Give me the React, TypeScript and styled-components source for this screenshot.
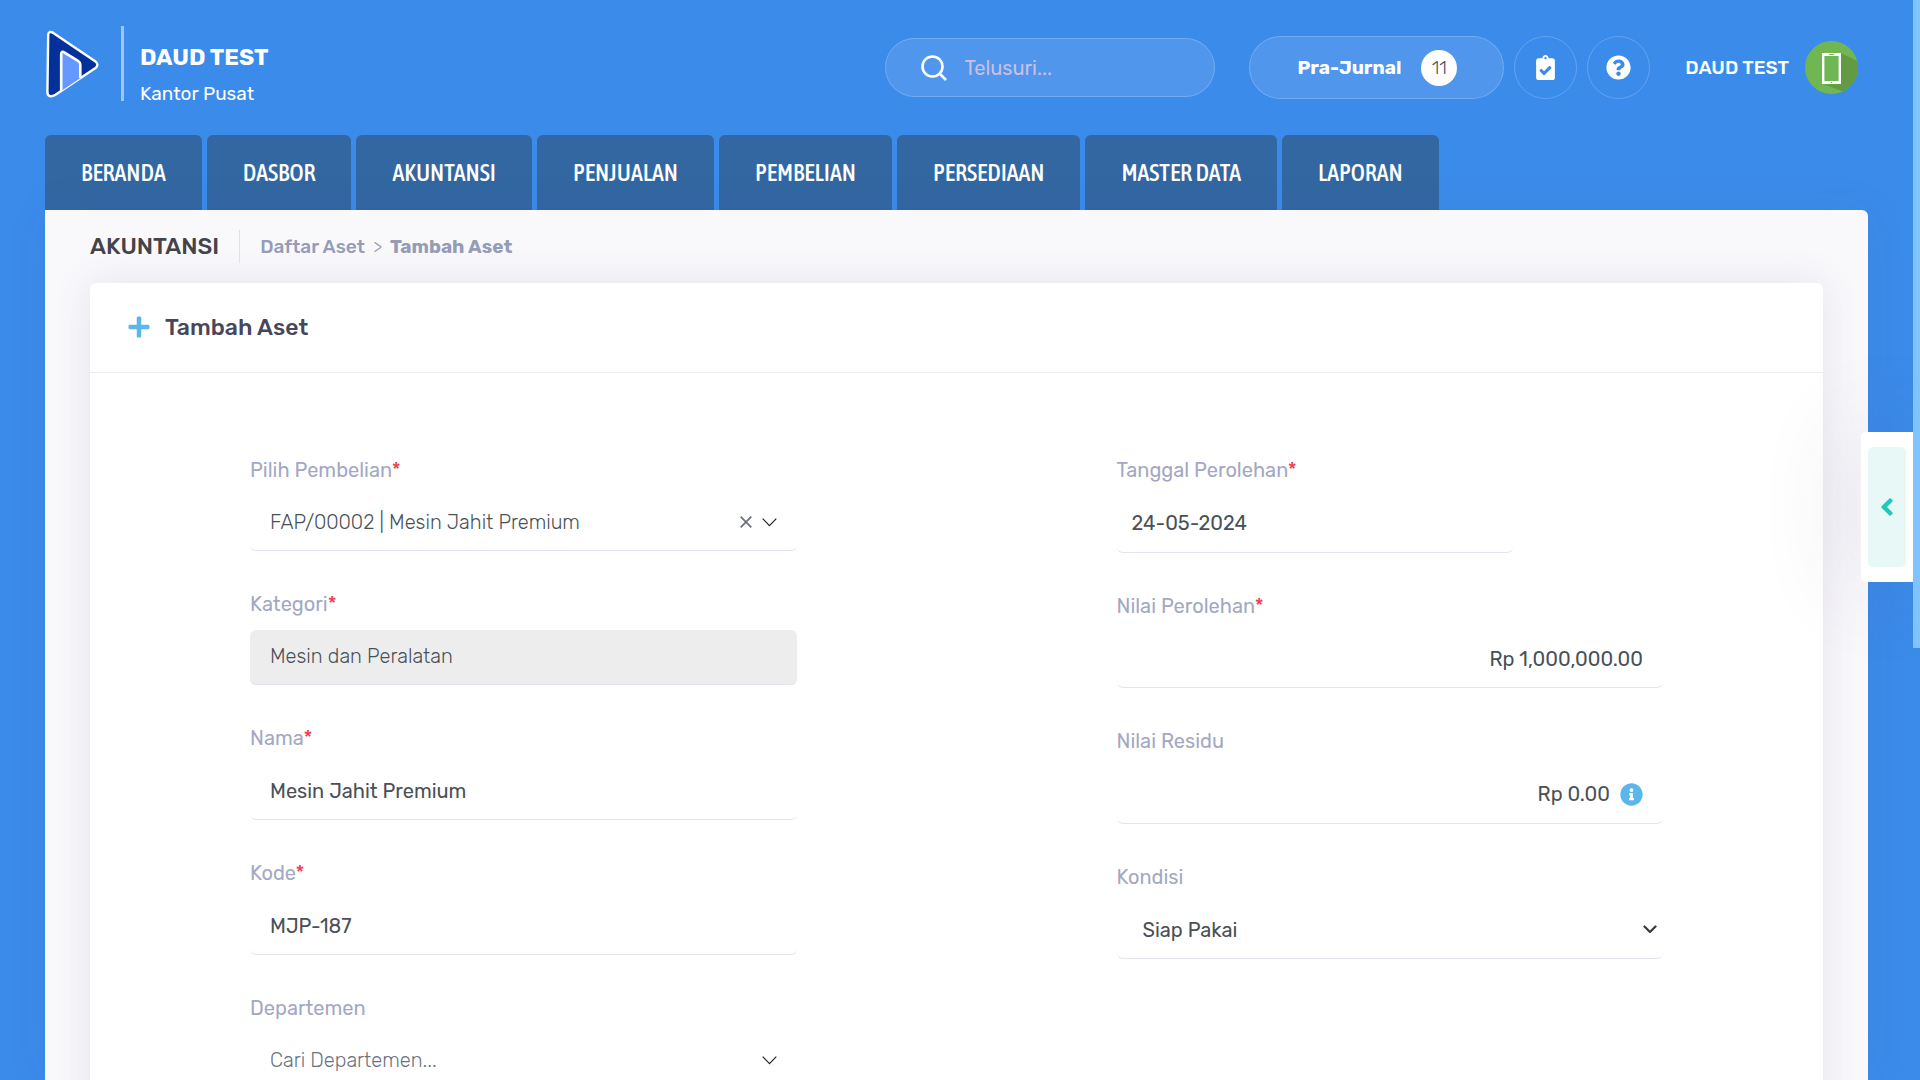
import React from "react";
import styled, { createGlobalStyle } from "styled-components";
import {
  FaPlus,
  FaClipboardCheck,
  FaQuestionCircle,
  FaInfoCircle,
  FaAngleLeft,
} from "react-icons/fa";

const GlobalStyle = createGlobalStyle`
  *, *::before, *::after { box-sizing: border-box; }
  body {
    margin: 0;
    background: #3b8bea;
    font-family: Rubik, Roboto, "Liberation Sans", sans-serif;
    font-size: 20px;
    color: #495057;
  }
  button, input, select { font: inherit; color: inherit; }
  a { color: inherit; text-decoration: none; }
  h1, h2, p { margin: 0; }
`;

const Page = styled.div`
  height: 100vh;
  overflow: hidden;
  display: flex;
  flex-direction: column;
  padding: 0 52px 0 45px;
`;

const Header = styled.header`
  display: flex;
  align-items: center;
  height: 135px;
  flex: none;
  color: #fff;
  font-size: 19px;
`;

const Brand = styled.a`
  display: flex;
  align-items: center;
  margin-right: auto;
  padding-bottom: 8px;
`;

const BrandText = styled.span`
  display: flex;
  flex-direction: column;
  gap: 10px;
  height: 75px;
  margin-left: 22px;
  padding: 16px 0 0 16px;
  border-left: 3px solid rgba(255, 255, 255, 0.5);
`;

const CompanyName = styled.strong`
  font-size: 23px;
  line-height: 30px;
  font-weight: 700;
`;

const BranchName = styled.span`
  line-height: 24px;
`;

const SearchBox = styled.label`
  display: flex;
  align-items: center;
  gap: 18px;
  width: 330px;
  height: 59px;
  padding: 0 35px;
  margin-right: 34px;
  border: 1px solid rgba(255, 255, 255, 0.2);
  border-radius: 30px;
  background: rgba(255, 255, 255, 0.1);
`;

const SearchInput = styled.input`
  flex: 1;
  min-width: 0;
  padding: 0;
  border: 0;
  outline: 0;
  background: transparent;
  font-size: 20px;
  &::placeholder { color: #cbbfe2; opacity: 1; }
`;

const JournalButton = styled.button`
  display: flex;
  align-items: center;
  gap: 20px;
  height: 63px;
  padding: 0 46px 0 48px;
  border: 1px solid rgba(255, 255, 255, 0.2);
  border-radius: 32px;
  background: rgba(255, 255, 255, 0.1);
  font-weight: 700;
`;

const Count = styled.span`
  display: grid;
  place-items: center;
  width: 36px;
  height: 36px;
  border-radius: 50%;
  background: #fff;
  color: #495057;
  font-weight: 300;
`;

const RoundButton = styled.button`
  display: grid;
  place-items: center;
  width: 63px;
  height: 63px;
  margin-left: 10px;
  padding: 0;
  border: 1px solid rgba(255, 255, 255, 0.2);
  border-radius: 50%;
  background: transparent;
  font-size: 25px;
`;

const Account = styled.button`
  display: flex;
  align-items: center;
  gap: 16px;
  margin: 0 10px 0 35px;
  padding: 0;
  border: 0;
  background: transparent;
  font-weight: 500;
`;

const Nav = styled.nav`
  display: flex;
  gap: 5px;
  flex: none;
  height: 75px;
`;

const NavTab = styled.a`
  display: flex;
  align-items: center;
  padding: 0 36px;
  border-radius: 6px 6px 0 0;
  background: #3367a2;
  color: #fff;
  font-family: "Asap Condensed", "Roboto Condensed", "Liberation Sans Narrow", Roboto, sans-serif;
  font-size: 24px;
  font-weight: 500;
`;

const Panel = styled.main`
  flex: 1;
  min-height: 0;
  overflow: hidden;
  padding: 0 45px;
  border-radius: 0 6px 0 0;
  background: #f9f9fc;
  box-shadow: 0 0 50px rgba(82, 63, 105, 0.05);
`;

const SubHeader = styled.div`
  display: flex;
  align-items: center;
  height: 73px;
`;

const Section = styled.h1`
  padding-right: 20px;
  border-right: 1px solid #dfe1e8;
  font-size: 23px;
  line-height: 33px;
  font-weight: 500;
  color: #434349;
`;

const Crumbs = styled.nav`
  display: flex;
  gap: 8px;
  padding-left: 20px;
  color: #959cb6;
  font-size: 19px;
  font-weight: 500;
`;

const Separator = styled.span`
  font-weight: 300;
`;

const CurrentCrumb = styled.span`
  font-weight: 700;
`;

const Card = styled.section`
  min-height: 1200px;
  border-radius: 6px;
  background: #fff;
  box-shadow: 0 0 38px rgba(82, 63, 105, 0.12);
`;

const CardHeader = styled.header`
  display: flex;
  align-items: center;
  gap: 14px;
  height: 90px;
  padding: 0 37px 2px;
  border-bottom: 1px solid #ebedf2;
  color: #5bb6ec;
`;

const CardTitle = styled.h2`
  font-size: 23px;
  font-weight: 500;
  color: #48465b;
`;

const Form = styled.form`
  display: grid;
  grid-template-columns: 1fr 1fr;
  padding-top: 83px;
`;

const Column = styled.div`
  display: flex;
  flex-direction: column;
  gap: 39px;
  padding: 0 160px;
`;

const Field = styled.div`
  display: flex;
  flex-direction: column;
  gap: 12px;
`;

const Label = styled.label`
  line-height: 28px;
  color: #a3a8c2;
`;

const Required = styled.span`
  color: #f0384e;
`;

const Control = styled.div<{
  $height?: number;
  $inset?: number;
  $end?: number;
  $maxWidth?: string;
  $muted?: boolean;
}>`
  display: flex;
  align-items: center;
  gap: 10px;
  max-width: ${(p) => p.$maxWidth ?? "none"};
  height: ${(p) => p.$height ?? 56}px;
  padding: 0 ${(p) => p.$end ?? 20}px 2px ${(p) => p.$inset ?? 20}px;
  border-bottom: 1px solid #e2e5ec;
  border-radius: 6px;
  background: ${(p) => (p.$muted ? "#ededed" : "transparent")};
`;

const TextInput = styled.input<{ $align?: string }>`
  flex: 1;
  min-width: 0;
  padding: 0;
  border: 0;
  outline: 0;
  background: transparent;
  text-align: ${(p) => p.$align ?? "left"};
`;

const Select = styled.select<{ $weight?: number; $color?: string }>`
  flex: 1;
  min-width: 0;
  padding: 0;
  border: 0;
  outline: 0;
  appearance: none;
  background: transparent;
  opacity: 1;
  font-weight: ${(p) => p.$weight ?? 400};
  color: ${(p) => p.$color ?? "#495057"};
`;

const IconButton = styled.button`
  display: grid;
  place-items: center;
  padding: 0;
  border: 0;
  background: transparent;
  color: #5bb6ec;
  font-size: 23px;
`;

const SideTab = styled.aside`
  position: fixed;
  top: 432px;
  right: 7px;
  display: flex;
  width: 52px;
  height: 150px;
  padding: 15px 7px;
  border-radius: 5px 0 0 5px;
  background: #fff;
  box-shadow: 0 0 100px rgba(82, 63, 105, 0.16);
`;

const SideToggle = styled.button`
  flex: 1;
  display: grid;
  place-items: center;
  padding: 0;
  border: 0;
  border-radius: 5px;
  background: #e8f8f6;
  color: #1dc9b7;
  font-size: 28px;
`;

const ScrollThumb = styled.div`
  position: fixed;
  top: 0;
  right: 0;
  width: 7px;
  height: 60vh;
  background: #80c4ff;
`;

const Logo = () => (
  <svg width="54" height="68" viewBox="0 0 54 68" aria-hidden="true">
    <path
      d="M3.200 5C3.200 1.800 5.500 1.200 8.300 2.900L50.500 31.500C53 33.300 53 36 50.500 38L10.500 64.800C6 67.500 2.400 66.500 2.400 62Z"
      fill="#03309b"
      stroke="#fff"
      strokeWidth="2.400"
    />
    <path
      d="M16.200 61V24C16.200 21.800 17.600 21.300 19.200 22.400L33 30.800C34.500 31.900 35.300 32.600 35.300 34.600V48.200"
      fill="#6699ff"
      stroke="#fff"
      strokeWidth="2.600"
    />
  </svg>
);

const SearchIcon = () => (
  <svg width="26" height="26" viewBox="0 0 26 26" fill="none" stroke="#fff" strokeWidth="2.600" aria-hidden="true">
    <circle cx="11.500" cy="11.500" r="10" />
    <path d="M18.500 18.500L25 25" />
  </svg>
);

const ThinChevron = () => (
  <svg width="15" height="9" viewBox="0 0 15 9" fill="none" stroke="#212529" strokeWidth="1.200" aria-hidden="true">
    <path d="M.7.7L7.500 7.700L14.300.7" />
  </svg>
);

const BoldChevron = () => (
  <svg width="14" height="9" viewBox="0 0 14 9" fill="none" stroke="#343a40" strokeWidth="2.200" strokeLinecap="round" strokeLinejoin="round" aria-hidden="true">
    <path d="M1.500 1.500L7 7L12.500 1.500" />
  </svg>
);

const ClearIcon = () => (
  <svg width="12" height="12" viewBox="0 0 12 12" stroke="#6c7280" strokeWidth="1.800" aria-hidden="true">
    <path d="M.7.7L11.300 11.300M11.300.7L.7 11.300" />
  </svg>
);

const Avatar = () => (
  <svg width="53" height="53" viewBox="0 0 53 53" aria-hidden="true">
    <circle cx="26.500" cy="26.500" r="26.500" fill="#70b753" />
    <path d="M36 12L52.200 20A26.500 26.500 0 0 1 38 50.400L19 43.500L36 43Z" fill="#629b43" />
    <rect x="18.200" y="13.500" width="16.600" height="28" fill="#70b753" stroke="#fff" strokeWidth="2.400" />
    <path d="M17 13.500H36M17 41.500H36" stroke="#fff" strokeWidth="3.200" />
    <path d="M24 13.500H29M25.900 41.500H27.200" stroke="#70b753" strokeWidth="1.200" />
  </svg>
);

const TABS = [
  "BERANDA",
  "DASBOR",
  "AKUNTANSI",
  "PENJUALAN",
  "PEMBELIAN",
  "PERSEDIAAN",
  "MASTER DATA",
  "LAPORAN",
];

const FieldLabel = ({ id, text, required }: { id: string; text: string; required?: boolean }) => (
  <Label htmlFor={id}>
    {text}
    {required && <Required>*</Required>}
  </Label>
);

export default function App() {
  return (
    <>
      <GlobalStyle />
      <Page>
        <Header>
          <Brand href="#">
            <Logo />
            <BrandText>
              <CompanyName>DAUD TEST</CompanyName>
              <BranchName>Kantor Pusat</BranchName>
            </BrandText>
          </Brand>
          <SearchBox>
            <SearchIcon />
            <SearchInput type="search" placeholder="Telusuri..." aria-label="Telusuri" />
          </SearchBox>
          <JournalButton type="button">
            Pra-Jurnal
            <Count>11</Count>
          </JournalButton>
          <RoundButton type="button" aria-label="Tugas">
            <FaClipboardCheck />
          </RoundButton>
          <RoundButton type="button" aria-label="Bantuan">
            <FaQuestionCircle />
          </RoundButton>
          <Account type="button">
            DAUD TEST
            <Avatar />
          </Account>
        </Header>

        <Nav>
          {TABS.map((tab) => (
            <NavTab key={tab} href="#">
              {tab}
            </NavTab>
          ))}
        </Nav>

        <Panel>
          <SubHeader>
            <Section>AKUNTANSI</Section>
            <Crumbs aria-label="Breadcrumb">
              <a href="#">Daftar Aset</a>
              <Separator>&gt;</Separator>
              <CurrentCrumb>Tambah Aset</CurrentCrumb>
            </Crumbs>
          </SubHeader>

          <Card>
            <CardHeader>
              <FaPlus size={24} />
              <CardTitle>Tambah Aset</CardTitle>
            </CardHeader>
            <Form>
              <Column>
                <Field>
                  <FieldLabel id="pembelian" text="Pilih Pembelian" required />
                  <Control $height={55}>
                    <Select id="pembelian" $weight={300}>
                      <option>FAP/00002 | Mesin Jahit Premium</option>
                    </Select>
                    <IconButton type="button" aria-label="Hapus pilihan">
                      <ClearIcon />
                    </IconButton>
                    <ThinChevron />
                  </Control>
                </Field>
                <Field>
                  <FieldLabel id="kategori" text="Kategori" required />
                  <Control $height={55} $muted>
                    <Select id="kategori" $weight={300} disabled>
                      <option>Mesin dan Peralatan</option>
                    </Select>
                  </Control>
                </Field>
                <Field>
                  <FieldLabel id="nama" text="Nama" required />
                  <Control>
                    <TextInput id="nama" defaultValue="Mesin Jahit Premium" />
                  </Control>
                </Field>
                <Field>
                  <FieldLabel id="kode" text="Kode" required />
                  <Control>
                    <TextInput id="kode" defaultValue="MJP-187" />
                  </Control>
                </Field>
                <Field>
                  <FieldLabel id="departemen" text="Departemen" />
                  <Control $height={55}>
                    <Select id="departemen" $weight={300} $color="#6c7280">
                      <option>Cari Departemen...</option>
                    </Select>
                    <ThinChevron />
                  </Control>
                </Field>
              </Column>

              <Column>
                <Field>
                  <FieldLabel id="tanggal" text="Tanggal Perolehan" required />
                  <Control $height={57} $inset={15} $maxWidth="396px">
                    <TextInput id="tanggal" defaultValue="24-05-2024" />
                  </Control>
                </Field>
                <Field>
                  <FieldLabel id="nilai" text="Nilai Perolehan" required />
                  <Control>
                    <TextInput id="nilai" $align="right" defaultValue="Rp 1,000,000.00" />
                  </Control>
                </Field>
                <Field>
                  <FieldLabel id="residu" text="Nilai Residu" />
                  <Control $height={57}>
                    <TextInput id="residu" $align="right" defaultValue="Rp 0.00" />
                    <IconButton type="button" aria-label="Info nilai residu">
                      <FaInfoCircle />
                    </IconButton>
                  </Control>
                </Field>
                <Field>
                  <FieldLabel id="kondisi" text="Kondisi" />
                  <Control $inset={26} $end={6}>
                    <Select id="kondisi">
                      <option>Siap Pakai</option>
                    </Select>
                    <BoldChevron />
                  </Control>
                </Field>
              </Column>
            </Form>
          </Card>
        </Panel>
      </Page>

      <SideTab>
        <SideToggle type="button" aria-label="Buka panel">
          <FaAngleLeft />
        </SideToggle>
      </SideTab>
      <ScrollThumb />
    </>
  );
}
